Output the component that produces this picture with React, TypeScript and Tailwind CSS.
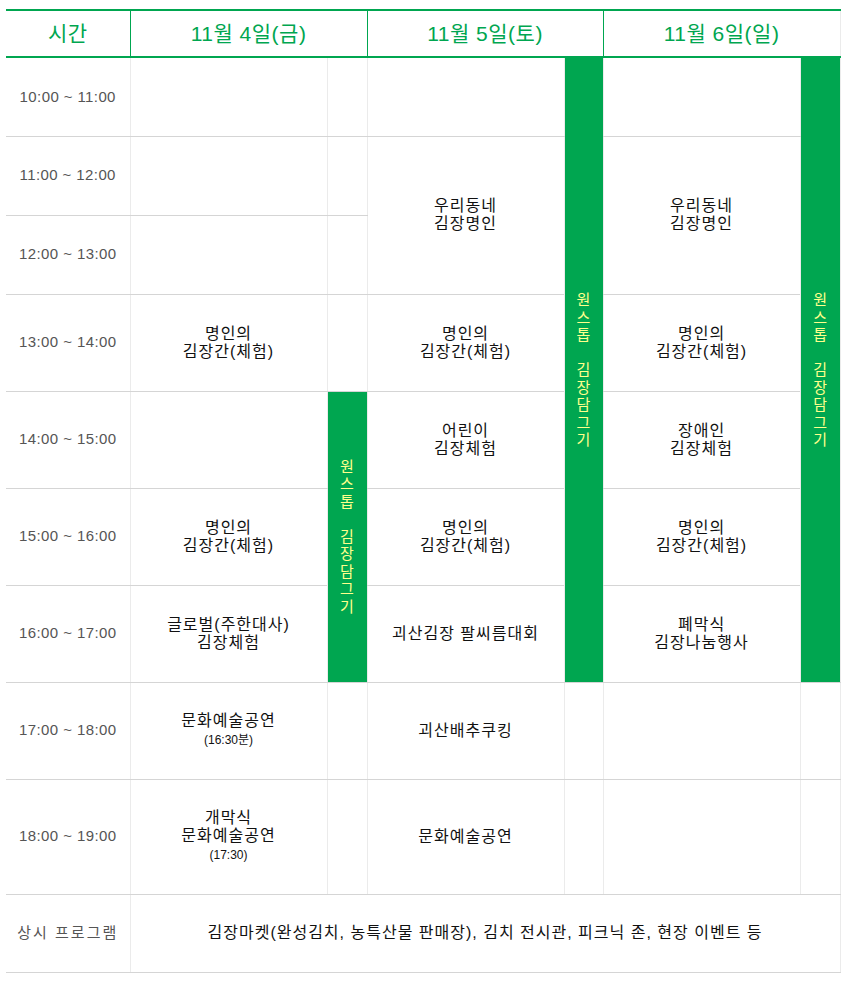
import React from "react";

const font = {
  fontFamily: '"Liberation Sans", "Noto Sans CJK KR", sans-serif',
};

const times = [
  "10:00 ~ 11:00",
  "11:00 ~ 12:00",
  "12:00 ~ 13:00",
  "13:00 ~ 14:00",
  "14:00 ~ 15:00",
  "15:00 ~ 16:00",
  "16:00 ~ 17:00",
  "17:00 ~ 18:00",
  "18:00 ~ 19:00",
];

const heights = ["h-[79px]", "h-[79px]", "h-[79px]", "h-[97px]", "h-[97px]", "h-[97px]", "h-[97px]", "h-[97px]", "h-[115px]"];

function OneStop() {
  const chars = ["원", "스", "톱", " ", "김", "장", "담", "그", "기"];
  return (
    <div className="flex flex-col items-center text-[15px] leading-[17.5px] tracking-normal text-[#ffff8c]">
      {chars.map((c, i) => (
        <span key={i} className="h-[17.5px]">
          {c === " " ? "\u00a0" : c}
        </span>
      ))}
    </div>
  );
}

function Cell({
  children,
  rowSpan,
  colSpan,
  green,
}: {
  children?: React.ReactNode;
  rowSpan?: number;
  colSpan?: number;
  green?: boolean;
}) {
  return (
    <td
      rowSpan={rowSpan}
      colSpan={colSpan}
      className={
        "border-b border-b-[#d5d5d5] border-l border-l-[#ebebeb] text-center align-middle text-[16px] leading-[18px] tracking-[1px] text-[#111] " +
        (green ? "bg-[#00a650]" : "")
      }
    >
      {children}
    </td>
  );
}

function Small({ children }: { children: React.ReactNode }) {
  return <span className="text-[12px] tracking-normal">{children}</span>;
}

export default function App() {
  return (
    <div className="bg-white w-[848px] h-[990px] pt-[9px] px-[6px]" style={font}>
      <table className="w-[834px] table-fixed border-collapse border-r border-r-[#ebebeb]">
        <colgroup>
          <col className="w-[124px]" />
          <col className="w-[197px]" />
          <col className="w-[40px]" />
          <col className="w-[197px]" />
          <col className="w-[39px]" />
          <col className="w-[197px]" />
          <col className="w-[40px]" />
        </colgroup>
        <thead>
          <tr className="h-[47px] border-t-2 border-b-2 border-[#00a650] text-[#00a650] text-[21px] tracking-[0.5px]">
            <th className="font-normal">시간</th>
            <th colSpan={2} className="font-normal border-l border-l-[#00a650]">
              11월 4일(금)
            </th>
            <th colSpan={2} className="font-normal border-l border-l-[#00a650]">
              11월 5일(토)
            </th>
            <th colSpan={2} className="font-normal border-l border-l-[#00a650]">
              11월 6일(일)
            </th>
          </tr>
        </thead>
        <tbody>
          {times.map((t, i) => (
            <tr key={t} className={heights[i]}>
              <td className="border-b border-b-[#d5d5d5] text-center text-[15px] tracking-[0.4px] text-[#555]">{t}</td>
              {/* 11월 4일 */}
              {i === 0 && <Cell />}
              {i === 1 && <Cell />}
              {i === 2 && <Cell />}
              {i === 3 && (
                <Cell>
                  명인의
                  <br />
                  김장간(체험)
                </Cell>
              )}
              {i === 4 && <Cell />}
              {i === 5 && (
                <Cell>
                  명인의
                  <br />
                  김장간(체험)
                </Cell>
              )}
              {i === 6 && (
                <Cell>
                  글로벌(주한대사)
                  <br />
                  김장체험
                </Cell>
              )}
              {i === 7 && (
                <Cell>
                  문화예술공연
                  <br />
                  <Small>(16:30분)</Small>
                </Cell>
              )}
              {i === 8 && (
                <Cell>
                  개막식
                  <br />
                  문화예술공연
                  <br />
                  <Small>(17:30)</Small>
                </Cell>
              )}
              {i < 4 && <Cell />}
              {i === 4 && (
                <Cell rowSpan={3} green>
                  <OneStop />
                </Cell>
              )}
              {i > 6 && <Cell />}

              {/* 11월 5일 */}
              {i === 0 && <Cell />}
              {i === 1 && (
                <Cell rowSpan={2}>
                  우리동네
                  <br />
                  김장명인
                </Cell>
              )}
              {i === 3 && (
                <Cell>
                  명인의
                  <br />
                  김장간(체험)
                </Cell>
              )}
              {i === 4 && (
                <Cell>
                  어린이
                  <br />
                  김장체험
                </Cell>
              )}
              {i === 5 && (
                <Cell>
                  명인의
                  <br />
                  김장간(체험)
                </Cell>
              )}
              {i === 6 && <Cell>괴산김장 팔씨름대회</Cell>}
              {i === 7 && <Cell>괴산배추쿠킹</Cell>}
              {i === 8 && <Cell>문화예술공연</Cell>}
              {i === 0 && (
                <Cell rowSpan={7} green>
                  <OneStop />
                </Cell>
              )}
              {i > 6 && <Cell />}

              {/* 11월 6일 */}
              {i === 0 && <Cell />}
              {i === 1 && (
                <Cell rowSpan={2}>
                  우리동네
                  <br />
                  김장명인
                </Cell>
              )}
              {i === 3 && (
                <Cell>
                  명인의
                  <br />
                  김장간(체험)
                </Cell>
              )}
              {i === 4 && (
                <Cell>
                  장애인
                  <br />
                  김장체험
                </Cell>
              )}
              {i === 5 && (
                <Cell>
                  명인의
                  <br />
                  김장간(체험)
                </Cell>
              )}
              {i === 6 && (
                <Cell>
                  폐막식
                  <br />
                  김장나눔행사
                </Cell>
              )}
              {i > 6 && <Cell />}
              {i === 0 && (
                <Cell rowSpan={7} green>
                  <OneStop />
                </Cell>
              )}
              {i > 6 && <Cell />}
            </tr>
          ))}
          <tr className="h-[78px]">
            <td className="border-b border-b-[#d5d5d5] text-center text-[15px] tracking-[2px] text-[#555]">상시 프로그램</td>
            <Cell colSpan={6}>김장마켓(완성김치, 농특산물 판매장), 김치 전시관, 피크닉 존, 현장 이벤트 등</Cell>
          </tr>
        </tbody>
      </table>
    </div>
  );
}
